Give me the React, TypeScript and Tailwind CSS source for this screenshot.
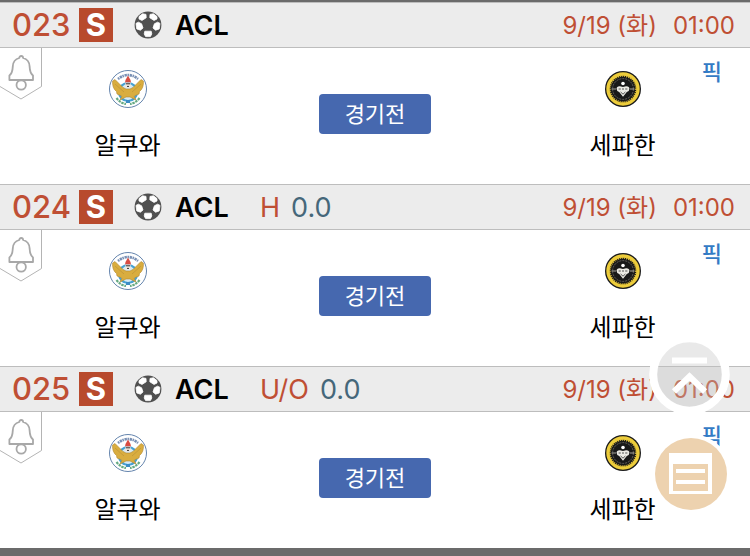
type Match = { no: string; kind?: string; line?: string };

const matches: Match[] = [
  { no: "023" },
  { no: "024", kind: "H", line: "0.0" },
  { no: "025", kind: "U/O", line: "0.0" },
];

function SoccerBall() {
  return (
    <svg viewBox="0 0 28 28" className="size-7 shrink-0" aria-hidden="true">
      <circle cx="14" cy="14" r="13.4" fill="#505050" />
      <g fill="#fff" stroke="#fff" strokeWidth=".8" strokeLinejoin="round">
        <path d="M5 5.6 L8.6 2.8 L12 3.4 L12.2 6.8 L8 9.4 L5 8Z" />
        <path d="M23 5.6 L19.4 2.8 L16 3.4 L15.8 6.8 L20 9.4 L23 8Z" />
        <path d="M2 12.4 L4.4 11.2 L7.6 12.8 L9 17 L6.4 19.2 L2.8 18Z" />
        <path d="M26 12.4 L23.6 11.2 L20.4 12.8 L19 17 L21.6 19.2 L25.2 18Z" />
        <path d="M10.8 20.2 H17.2 L17.8 23 L16.4 25.6 H11.6 L10.2 23Z" />
      </g>
    </svg>
  );
}

function BellTag() {
  return (
    <svg viewBox="0 0 42 52" className="absolute top-0 left-0 h-[52px] w-[42px]" fill="none" aria-hidden="true">
      <path d="M41.5 0 V38.5 L21 51 L0 38.5" stroke="#b4b4b4" />
      <g stroke="#a8a8a8" strokeWidth="1.8" strokeLinejoin="round">
        <path d="M19.3 10 Q19.3 8 21.2 8 Q23.1 8 23.1 10 Q29.3 11.6 29.6 18.4 C29.8 23.2 30.4 25.6 33 27.4 V32 H9.4 V27.4 C12 25.6 12.6 23.2 12.8 18.4 Q13.1 11.6 19.3 10Z" />
        <circle cx="21.2" cy="37" r="4.7" />
      </g>
    </svg>
  );
}

function FalconCrest() {
  return (
    <svg viewBox="0 0 40 40" className="size-10" aria-hidden="true">
      <circle cx="20" cy="20" r="18.5" fill="#fff" stroke="#6484ad" />
      <path d="M10 10 Q20 2 30 10" fill="none" stroke="#7890b5" strokeWidth="2.6" strokeDasharray="1.5 .7 2.4 .6" />
      <circle cx="20" cy="23" r="9" fill="#d6eaf5" stroke="#45a1d3" strokeWidth="2.2" />
      <path d="M8.5 29 Q12 34 18 35 M31.5 29 Q28 34 22 35" fill="none" stroke="#64a982" strokeWidth="2.2" strokeDasharray="2.5 .8" />
      <path d="M4.6 12 Q4 19 8.5 22.5 L9 25 L14 27 L12 31 L18 28 H22 L28 31 L26 27 L31 25 L31.5 22.5 Q36 19 35.4 12 L33 10.5 L25 18.5 L22 20 H18 L15 18.5 L7 10.5Z" fill="#d9ad3f" stroke="#b3882f" strokeWidth=".6" />
      <path d="M7 15 L16 23 M33 15 L24 23" stroke="#b98e35" strokeWidth=".6" />
      <path d="M17.5 11 L20 6.5 L22.5 11 L23 13.5 H17Z" fill="#d94c42" />
      <path d="M17.5 13.5 H22.5 V18.5 H17.5Z" fill="#f1e8df" />
      <path d="M18 14.8 H22 M19 17.4 H21" stroke="#333" />
      <path d="M18 31 H22 V34 H18Z" fill="#3a8bc4" />
    </svg>
  );
}

function GoldCrest() {
  return (
    <svg viewBox="0 0 40 40" className="size-10" aria-hidden="true">
      <circle cx="20" cy="20" r="18" fill="#191919" />
      <circle cx="20" cy="20" r="15" fill="#191919" stroke="#edcd3b" strokeWidth="3.4" />
      <circle cx="20" cy="20" r="13.2" fill="none" stroke="#e1c13c" strokeWidth="2" strokeDasharray="1 1.1" />
      <circle cx="20" cy="20" r="10.4" fill="none" stroke="#77746d" strokeWidth=".8" strokeDasharray="2 1" />
      <path d="M8.5 20 H13 M27 20 H31.5" stroke="#a7a49c" />
      <circle cx="20" cy="14.5" r="1.8" fill="#fff" />
      <path d="M13.6 19.8 Q13.6 17 17 17.2 L20 18 L23 17.2 Q26.4 17 26.4 19.8 Q26.4 22.4 23.8 23 L20 27.8 L16.2 23 Q13.6 22.4 13.6 19.8Z" fill="#ecebe5" />
      <path d="M15.6 20 H17.8 M19 20 H21 M22.2 20 H24.4 M17.6 23 L20 25.2 L22.4 23" fill="none" stroke="#444" strokeWidth=".9" />
    </svg>
  );
}

function Team({ name, home }: { name: string; home?: boolean }) {
  return (
    <div className="flex flex-col items-center gap-[21px] pt-[21px]">
      {home ? <FalconCrest /> : <GoldCrest />}
      <span className="text-2xl leading-8 text-black">{name}</span>
    </div>
  );
}

function MatchCard({ no, kind, line }: Match) {
  return (
    <section>
      <header className="flex h-[46px] items-center border-y border-[#bdbdbd] bg-[#ececec] pr-[15px] pl-3 text-[#bf4f34]">
        <span className="w-[67px] text-[31px] font-medium">{no}</span>
        <span className="flex size-[34px] items-center justify-center bg-[#b84a2d] text-[31px] font-bold text-white">S</span>
        <span className="ml-[21px] flex w-[126px] items-center gap-[13px]">
          <SoccerBall />
          <span className="pt-0.5 text-[27px] font-semibold text-black">ACL</span>
        </span>
        {kind && (
          <span className="flex gap-[11px] pt-0.5 text-[27px]">
            <span>{kind}</span>
            <span className="text-[#45677a]">{line}</span>
          </span>
        )}
        <time className="ml-auto flex gap-4 pt-0.5 text-2xl">
          <span>9/19 (화)</span>
          <span>01:00</span>
        </time>
      </header>
      <div className="relative grid h-[136px] grid-cols-[34fr_32fr_34fr] items-start bg-white">
        <button aria-label="알림" className="absolute top-0 left-0 h-[52px] w-[42px]">
          <BellTag />
        </button>
        <Team name="알쿠와" home />
        <button className="mt-[46px] h-10 w-28 justify-self-center rounded bg-[#4668af] text-[22px] leading-10 text-white">
          경기전
        </button>
        <Team name="세파한" />
        <a href="#pick" className="absolute top-2 right-7 text-[22px] leading-8 font-medium text-[#347bc5]">
          픽
        </a>
      </div>
    </section>
  );
}

export default function App() {
  return (
    <main className="relative min-h-screen overflow-hidden border-t-2 border-b-8 border-[#6b6b6b] bg-white font-['Inter','Noto_Sans_CJK_KR',sans-serif]">
      {matches.map((m) => (
        <MatchCard key={m.no} {...m} />
      ))}
      <button aria-label="맨 위로" className="fixed right-5 bottom-[141px] size-[81px]">
        <svg viewBox="0 0 81 81" className="size-full" fill="none">
          <circle cx="40.5" cy="40.5" r="36.5" fill="#c0c0c0" fillOpacity=".35" />
          <circle cx="40.5" cy="40.5" r="36.3" stroke="#fff" strokeWidth="8" />
          <path d="M23 26.5 H58 M25 57.5 L40.5 42.5 L56 57.5" stroke="#fff" strokeWidth="6" />
        </svg>
      </button>
      <button aria-label="목록" className="fixed right-[19px] bottom-[42px] size-20">
        <svg viewBox="0 0 80 80" className="size-full">
          <circle cx="40" cy="40" r="40" fill="#fff" />
          <circle cx="40" cy="40" r="36" fill="#edd2af" />
          <path d="M18 19 H61 V60 H18Z" fill="#fff" />
          <path d="M22 30 H57 V57 H22Z" fill="#edd2af" />
          <path d="M25 37 H54 M25 48 H54" stroke="#fff" strokeWidth="4" />
        </svg>
      </button>
    </main>
  );
}
